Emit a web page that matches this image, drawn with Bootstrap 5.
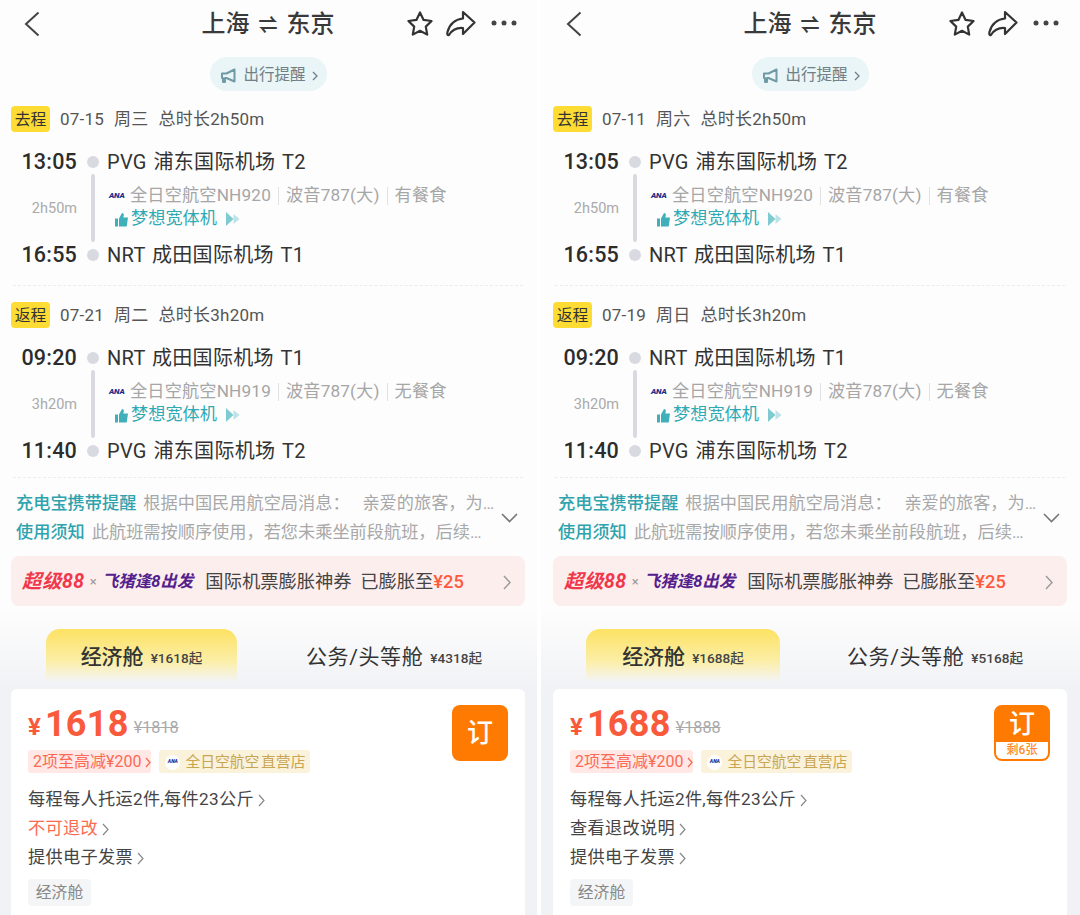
<!DOCTYPE html>
<html lang="zh-CN">
<head>
    <meta charset="UTF-8">
    <meta name="viewport" content="width=device-width, initial-scale=1.0">
    <title>上海 - 东京 机票</title>
    <link href="https://cdn.jsdelivr.net/npm/bootstrap@5.3.3/dist/css/bootstrap.min.css" rel="stylesheet">
    <style>
        html, body { height: 915px; overflow: hidden; background: #fff; }
        body { font-family: Roboto, "Noto Sans CJK SC", sans-serif; color: #333; }
        .screens { width: 1080px; height: 915px; gap: 4px; }
        .pane { height: 915px; background: linear-gradient(180deg, #fdfdfd 610px, #f1f2f5 690px); overflow: hidden; }
        .pane-a { width: 537px; padding: 0 12px 0 11px; }
        .pane-b { width: 539px; padding: 0 13px 0 12px; }
        .top-bar { height: 46px; position: relative; }
        .back-ico { margin: 2px 0 0 12px; }
        .route-title { position: absolute; left: 0; right: 0; top: 0; text-align: center; font-size: 24px; line-height: 48px; font-weight: 500; color: #3a3a3a; }
        .route-arrow { font-size: 19px; margin: 0 9px; font-weight: 700; }
        .top-actions { margin-left: auto; gap: 13.5px; margin-right: 8px; position: relative; }
        .share-ico { margin: 0 2px 0 -2px; }
        .notice-pill { height: 34px; width: 117px; margin: 11px auto 15px; border-radius: 17px; background: #e9f5f6; color: #6f8088; font-size: 15.5px; gap: 6px; padding: 4px 0 0 3px; }
        .leg-head { height: 26px; }
        .leg-tag { width: 39px; height: 26px; background: #ffdc33; border-radius: 4px; font-size: 15.8px; color: #333; padding-top: 2px; }
        .leg-info { margin-left: 10px; font-size: 17px; color: #555; white-space: pre; padding-top: 2px; letter-spacing: .25px; word-spacing: .5px; }
        .stop-row { height: 30px; padding-top: 2px; }
        .first-stop { margin-top: 14px; }
        .stop-time { width: 66px; text-align: right; font-size: 21.5px; font-weight: 500; color: #2c2c2c; letter-spacing: .2px; }
        .stop-dot { width: 12px; height: 12px; border-radius: 50%; background: #d9dae1; margin: 0 8px 0 10px; }
        .stop-name { font-size: 20px; color: #333; word-spacing: 1.5px; letter-spacing: .3px; }
        .leg-mid { height: 63px; }
        .dur-text { width: 66px; text-align: right; font-size: 14.5px; color: #aaa; align-self: center; padding-top: 3px; }
        .mid-line { width: 4px; margin: -2px 13px -3px 14px; background: #d9dae1; border-radius: 2px; flex: none; }
        .mid-body { padding-top: 8px; }
        .flight-line { height: 24px; font-size: 17.2px; color: #a6a6a6; letter-spacing: .15px; }
        .ana-logo { width: 22px; padding-left: 1px; font-size: 8px; font-weight: 900; font-style: italic; color: #1b2a8a; letter-spacing: -.2px; }
        .bar-sep { width: 1px; height: 18px; background: #e2e2e2; margin: 0 7px; }
        .perk-line { height: 22px; font-size: 17.2px; color: #2fa9b3; }
        .thumb-ico { margin: 0 2px 0 6px; }
        .perk-arrow { margin-left: 9px; }
        .dash-rule { border-top: 1px dashed #ececec; }
        .rule-one { margin: 16px 2px; }
        .rule-two { margin: 12px 2px 10px; }
        .notes-row { position: relative; }
        .note-line { height: 29px; line-height: 30px; margin-left: 5px; font-size: 17.2px; color: #a8a8a8; white-space: pre; }
        .note-key { font-weight: 500; color: #2fa3ad; margin-right: 7px; }
        .notes-chev { position: absolute; right: 7px; top: 25px; }
        .promo-bar { height: 50px; margin-top: 10px; background: #fdeeee; border-radius: 8px; padding: 2px 14px 0 11px; font-size: 18.3px; color: #444; word-spacing: 4px; }
        .promo-red { font-weight: 700; font-style: italic; font-size: 19.5px; color: #f0384a; letter-spacing: .5px; }
        .promo-x { font-size: 13px; color: #999; margin: 0 5px; }
        .promo-purple { font-weight: 700; font-style: italic; font-size: 16.5px; color: #54218c; margin-right: 12px; }
        .promo-num { color: #ff5a3c; font-weight: 500; }
        .cabin-tabs { height: 53px; margin: 23px 0 7px; }
        .pane-a .cabin-tabs { padding-left: 35px; }
        .pane-b .cabin-tabs { padding-left: 33px; }
        .cabin-on { width: 191px; padding-top: 4px; border-radius: 14px 14px 0 0; background: linear-gradient(180deg, #fde263 0%, #fbeea6 60%, rgba(247, 244, 225, 0) 100%); }
        .pane-b .cabin-on { width: 194px; }
        .cabin-off { margin-left: 69px; padding-top: 4px; }
        .pane-b .cabin-off { margin-left: 67px; }
        .cabin-name { font-size: 21px; color: #333; }
        .cabin-on .cabin-name { font-weight: 500; }
        .cabin-off .cabin-name { letter-spacing: .6px; }
        .cabin-from { font-size: 13.6px; font-weight: 500; margin-left: 7px; color: #444; padding-top: 2px; }
        .fare-card { position: relative; height: 300px; background: #fff; border-radius: 6px; padding: 12px 17px; }
        .price-line { height: 44px; padding-top: 2px; }
        .price-cur { font-size: 24px; font-weight: 700; color: #fa5a3c; margin-right: 4px; padding-top: 5px; }
        .price-num { font-size: 36px; font-weight: 700; color: #fa5a3c; letter-spacing: .3px; }
        .price-old { font-size: 16.2px; color: #aaa; margin-left: 5px; padding-top: 9px; text-decoration: line-through; }
        .tag-line { margin-top: 5px; gap: 8px; }
        .cut-tag { height: 23px; padding: 1px 0 0 5px; background: #ffe8e5; border-radius: 3px; font-size: 16px; color: #fb6a55; }
        .shop-tag { height: 23px; padding: 1px 5px 0 6px; background: #fbf2dc; border-radius: 3px; font-size: 14.8px; color: #c8a551; gap: 5px; word-spacing: -2px; }
        .shop-logo { width: 15px; height: 15px; border-radius: 50%; background: #fff; font-size: 5px; font-weight: 900; font-style: italic; color: #1b2a8a; }
        .rule-list { margin-top: 12px; }
        .rule-item { height: 29px; font-size: 17.2px; color: #444; gap: 4px; padding-top: 1px; letter-spacing: .3px; }
        .rule-warn { color: #fb6a50; }
        .cabin-chip { width: 63px; height: 27px; margin-top: 7px; background: #f4f5f7; border-radius: 4px; font-size: 15.8px; color: #888; padding-top: 1px; }
        .book-btn { position: absolute; right: 17px; top: 16px; width: 56px; height: 56px; border-radius: 8px; background: #ff7a00; color: #fff; font-size: 26px; font-weight: 500; padding: 0; border: 0; }
        .book-stock { overflow: hidden; border: 2px solid #ff7a00; }
        .book-stock .book-main { height: 35px; line-height: 35px; font-size: 26px; }
        .book-stock .book-left { height: 17px; line-height: 17px; background: #fff; color: #ff8a2a; font-size: 12px; }
    </style>
</head>
<body>
    <div class="screens d-flex" id="screens"></div>

    <script src="https://cdn.jsdelivr.net/npm/bootstrap@5.3.3/dist/js/bootstrap.bundle.min.js"></script>
    <script>
        const chevSmall = '<svg width="7" height="13" viewBox="0 0 7 13"><path d="M1 1l5 5.5L1 12" fill="none" stroke="#888" stroke-width="1.2"/></svg>';

        const panes = [
            {
                cls: 'pane-a', go: '07-15  周三  总时长2h50m', back: '07-21  周二  总时长3h20m',
                eco: '¥1618起', biz: '¥4318起', price: '1618', old: '¥1818',
                refund: '不可退改', refundCls: 'rule-warn',
                book: '<button class="book-btn btn">订</button>'
            },
            {
                cls: 'pane-b', go: '07-11  周六  总时长2h50m', back: '07-19  周日  总时长3h20m',
                eco: '¥1688起', biz: '¥5168起', price: '1688', old: '¥1888',
                refund: '查看退改说明', refundCls: '',
                book: '<button class="book-btn book-stock btn"><div class="book-main">订</div><div class="book-left">剩6张</div></button>'
            }
        ];

        function legHtml(tag, info, t1, from, dur, flight, meal, t2, to) {
            return `
<div class="leg-head d-flex align-items-center">
    <div class="leg-tag d-flex align-items-center justify-content-center">${tag}</div>
    <div class="leg-info">${info}</div>
</div>
<div class="stop-row first-stop d-flex align-items-center">
    <div class="stop-time">${t1}</div><div class="stop-dot"></div><div class="stop-name">${from}</div>
</div>
<div class="leg-mid d-flex">
    <div class="dur-text">${dur}</div>
    <div class="mid-line"></div>
    <div class="mid-body">
        <div class="flight-line d-flex align-items-center"><span class="ana-logo">ANA</span>全日空航空${flight}<span class="bar-sep"></span>波音787(大)<span class="bar-sep"></span>${meal}</div>
        <div class="perk-line d-flex align-items-center">
            <svg class="thumb-ico" width="15" height="15" viewBox="0 0 15 15"><path d="M1 6.5h3v8H1zM5 6.5 8 1c1.5 0 2 1 1.8 2.5L9.3 5.5H14l-1.3 9H5z" fill="#3fb0ba"/></svg>
            <span>梦想宽体机</span>
            <svg class="perk-arrow" width="15" height="14" viewBox="0 0 15 14"><path d="M0 0l7.5 7L0 14z" fill="#7fcbd2"/><path d="M7.5 2l6 5-6 5z" fill="#bde3e6"/></svg>
        </div>
    </div>
</div>
<div class="stop-row d-flex align-items-center">
    <div class="stop-time">${t2}</div><div class="stop-dot"></div><div class="stop-name">${to}</div>
</div>`;
        }

        function paneHtml(p) {
            return `
<div class="pane ${p.cls}">
    <div class="top-bar d-flex align-items-center">
        <svg class="back-ico" width="18" height="26" viewBox="0 0 18 26"><path d="M15.5 1.5 3 13 15.5 24.5" fill="none" stroke="#444" stroke-width="2"/></svg>
        <div class="route-title">上海<span class="route-arrow">⇌</span>东京</div>
        <div class="top-actions d-flex align-items-center">
            <svg width="28" height="27" viewBox="0 0 28 27"><path d="M14 2.5l3.6 7.4 8 1.1-5.8 5.6 1.4 8-7.2-3.8-7.2 3.8 1.4-8L2.4 11l8-1.1z" fill="none" stroke="#333" stroke-width="2.2" stroke-linejoin="round"/></svg>
            <svg class="share-ico" width="30" height="27" viewBox="0 0 30 27"><path d="M17 2 28.5 12.5 17 24V18C11 17.5 6 20 3 25 1.5 25.5 1 24 1.5 22 3.5 14 9 9.5 17 8.5Z" fill="none" stroke="#333" stroke-width="2.2" stroke-linejoin="round"/></svg>
            <svg width="26" height="6" viewBox="0 0 26 6"><circle cx="3" cy="3" r="2.5" fill="#444"/><circle cx="13" cy="3" r="2.5" fill="#444"/><circle cx="23" cy="3" r="2.5" fill="#444"/></svg>
        </div>
    </div>
    <div class="notice-pill d-flex align-items-center justify-content-center">
        <svg width="16" height="16" viewBox="0 0 16 16"><path d="M1 5.5h4.5L13.5 1.5v12L5.5 10H4v4H2v-4H1z" fill="none" stroke="#6f9aa6" stroke-width="2" stroke-linejoin="round"/></svg>
        <span>出行提醒</span>
        <svg width="6" height="10" viewBox="0 0 6 10"><path d="M1 1l4 4-4 4" fill="none" stroke="#6f8088" stroke-width="1.3"/></svg>
    </div>
    ${legHtml('去程', p.go, '13:05', 'PVG 浦东国际机场 T2', '2h50m', 'NH920', '有餐食', '16:55', 'NRT 成田国际机场 T1')}
    <div class="dash-rule rule-one"></div>
    ${legHtml('返程', p.back, '09:20', 'NRT 成田国际机场 T1', '3h20m', 'NH919', '无餐食', '11:40', 'PVG 浦东国际机场 T2')}
    <div class="dash-rule rule-two"></div>
    <div class="notes-row">
        <div class="note-line"><span class="note-key">充电宝携带提醒</span>根据中国民用航空局消息：　 亲爱的旅客，为…</div>
        <div class="note-line"><span class="note-key">使用须知</span>此航班需按顺序使用，若您未乘坐前段航班，后续…</div>
        <svg class="notes-chev" width="17" height="10" viewBox="0 0 17 10"><path d="M1 1l7.5 7.5L16 1" fill="none" stroke="#777" stroke-width="1.6"/></svg>
    </div>
    <div class="promo-bar d-flex align-items-center">
        <span class="promo-red">超级88</span><span class="promo-x">×</span><span class="promo-purple">飞猪逢8出发</span>
        <span>国际机票膨胀神券 已膨胀至<span class="promo-num">¥25</span></span>
        <svg class="ms-auto" width="8" height="15" viewBox="0 0 8 15"><path d="M1 1l6 6.5L1 14" fill="none" stroke="#999" stroke-width="1.4"/></svg>
    </div>
    <div class="cabin-tabs d-flex">
        <div class="cabin-on d-flex align-items-center justify-content-center"><span class="cabin-name">经济舱</span><span class="cabin-from">${p.eco}</span></div>
        <div class="cabin-off d-flex align-items-center"><span class="cabin-name">公务/头等舱</span><span class="cabin-from">${p.biz}</span></div>
    </div>
    <div class="fare-card">
        <div class="price-line d-flex align-items-center"><span class="price-cur">¥</span><span class="price-num">${p.price}</span><span class="price-old">${p.old}</span></div>
        <div class="tag-line d-flex">
            <div class="cut-tag d-flex align-items-center">2项至高减¥200<svg class="ms-1" width="6" height="11" viewBox="0 0 6 11"><path d="M1 1l4 4.5L1 10" fill="none" stroke="#fb6a55" stroke-width="1.3"/></svg></div>
            <div class="shop-tag d-flex align-items-center"><span class="shop-logo d-flex align-items-center justify-content-center">ANA</span>全日空航空 直营店</div>
        </div>
        <div class="rule-list">
            <div class="rule-item d-flex align-items-center">每程每人托运2件,每件23公斤${chevSmall}</div>
            <div class="rule-item ${p.refundCls} d-flex align-items-center">${p.refund}${chevSmall}</div>
            <div class="rule-item d-flex align-items-center">提供电子发票${chevSmall}</div>
        </div>
        <div class="cabin-chip d-flex align-items-center justify-content-center">经济舱</div>
        ${p.book}
    </div>
</div>`;
        }

        document.getElementById('screens').innerHTML = panes.map(paneHtml).join('');
    </script>
</body>
</html>
